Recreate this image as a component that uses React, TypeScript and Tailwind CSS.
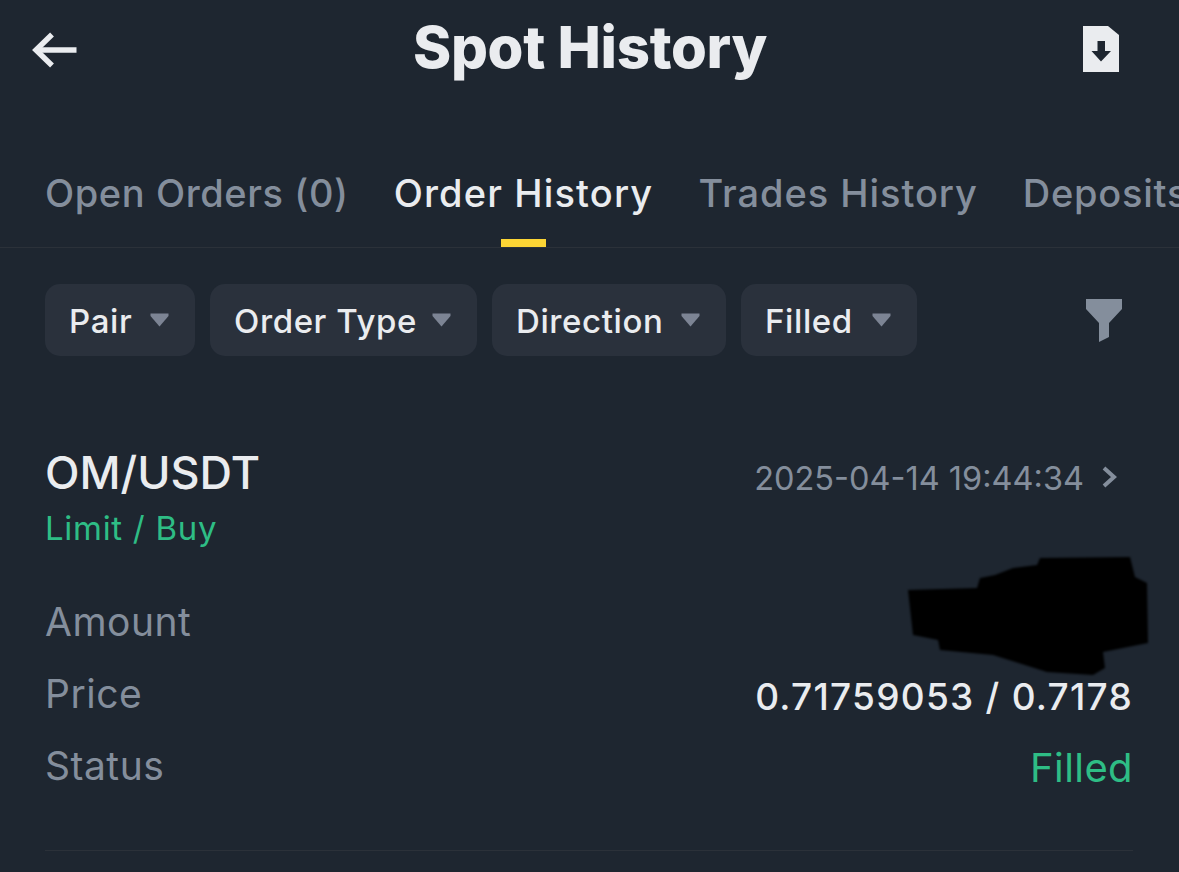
const sans = "font-['Inter','Noto_Sans',sans-serif]";

function Caret() {
  return (
    <svg width="19" height="14" viewBox="0 0 19 14" className="mt-[-1px]">
      <path d="M0.5 0.5H18.5V3L9.5 13.5L0.5 3Z" fill="#7c8494" />
    </svg>
  );
}

function Chip({ label, width }: { label: string; width: string }) {
  return (
    <div className={`flex h-[72px] items-center justify-between rounded-[15px] bg-[#2a313c] pl-[24px] pr-[26px] ${width}`}>
      <span className="mt-[4px] text-[33px] font-medium tracking-[0.6px] text-[#eaecef]">{label}</span>
      <Caret />
    </div>
  );
}

function Row({ label, children }: { label: string; children?: React.ReactNode }) {
  return (
    <div className="flex h-[72px] items-center justify-between">
      <span className="text-[39px] tracking-[0.5px] text-[#848e9c]">{label}</span>
      {children}
    </div>
  );
}

export default function App() {
  return (
    <div className={`${sans} h-[872px] w-[1179px] overflow-hidden bg-[#1e2630]`}>
      <header className="flex h-[100px] items-center justify-between pl-[32px] pr-[60px]">
        <svg width="46" height="36" viewBox="0 0 46 36" fill="none" stroke="#eaecef" strokeWidth="5.5">
          <path d="M44.5 18H5" />
          <path d="M20 2.5L4 18L20 33.5" />
        </svg>
        <h1 className="mb-[5px] ml-[19px] text-[58px] font-extrabold tracking-[-0.3px] text-[#eaecef]">Spot History</h1>
        <svg width="36" height="46" viewBox="0 0 36 46" className="mb-[3px]">
          <path d="M0 0H25L36 9V46H0Z" fill="#eaecef" />
          <path d="M14.5 15H22V25H28L18 35.5L8.5 25H14.5Z" fill="#1e2630" />
        </svg>
      </header>

      <nav className="flex h-[148px] items-start gap-[45px] overflow-hidden border-b border-[#2b3139] pl-[45px] pt-[67px] whitespace-nowrap text-[38px] font-medium leading-[52px]">
        <span className="tracking-[0.6px] text-[#848e9c]">Open Orders (0)</span>
        <span className="relative tracking-[1.15px] text-[#eaecef]">
          Order History
          <span className="absolute left-[107px] top-[72px] h-[8px] w-[45px] bg-[#fcd535]" />
        </span>
        <span className="tracking-[0.95px] text-[#848e9c]">Trades History</span>
        <span className="tracking-[0.75px] text-[#848e9c]">Deposits</span>
      </nav>

      <div className="flex items-center gap-[15px] pl-[45px] pr-[57px] pt-[36px]">
        <Chip label="Pair" width="w-[150px]" />
        <Chip label="Order Type" width="w-[267px]" />
        <Chip label="Direction" width="w-[234px]" />
        <Chip label="Filled" width="w-[176px]" />
        <svg width="36" height="43" viewBox="0 0 36 43" className="ml-auto mt-[1px]">
          <path d="M0 0H36V10L23 24V38L13 43V24L0 10Z" fill="#848e9c" />
        </svg>
      </div>

      <section className="relative ml-[45px] mr-[46px] mt-[85px] h-[410px] border-b border-[#2b3139]">
        <div className="flex items-start justify-between">
          <span className="mt-[2px] text-[45px] font-medium leading-[60px] text-[#eaecef]">OM/USDT</span>
          <span className="flex items-center gap-[17px] pr-[16px] pt-[12px] text-[32.5px] leading-[52px] text-[#848e9c]">
            2025-04-14 19:44:34
            <svg width="16" height="24" viewBox="0 0 16 24" fill="none" stroke="#848e9c" strokeWidth="4" className="mt-[-4px]">
              <path d="M3 3L13 12L3 21" />
            </svg>
          </span>
        </div>
        <div className="mt-[1px] text-[33px] leading-[44px] tracking-[0.7px] text-[#2ebd85]">Limit / Buy</div>
        <div className="mt-[36px]">
          <Row label="Amount" />
          <Row label="Price">
            <span className="mt-[5px] text-[37px] font-medium tracking-[1.25px] text-[#eaecef]">0.71759053 / 0.7178</span>
          </Row>
          <Row label="Status">
            <span className="mt-[4px] text-[40px] tracking-[0.4px] text-[#2ebd85]">Filled</span>
          </Row>
        </div>
        <svg width="240" height="118" viewBox="0 0 240 118" className="absolute right-[-15px] top-[116px] blur-[1px]">
          <path d="M0 33L69 31L72 21L87 18L105 11L129 8L132 1L222 0L227 20L239 26L240 86L195 95L197 111L185 118L139 115L85 98L32 93L30 83L5 78Z" fill="#000" />
        </svg>
      </section>
    </div>
  );
}
